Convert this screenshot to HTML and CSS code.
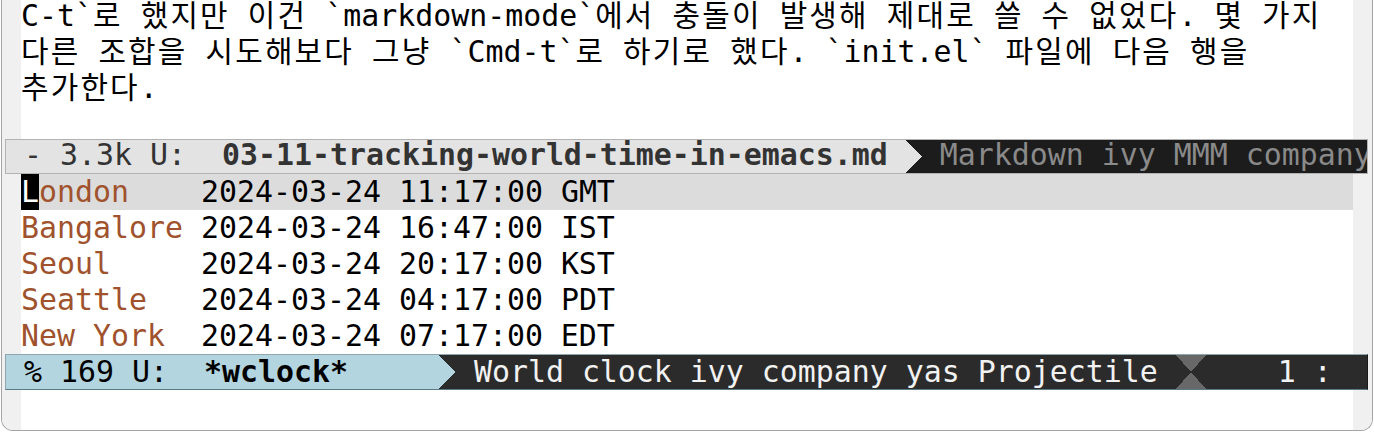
FILE: index.html
```html
<!DOCTYPE html>
<html lang="ko">
<head>
<meta charset="utf-8">
<title>wclock</title>
<link rel="stylesheet" href="styles.css">
</head>
<body>
<div class="frame">
  <div class="window text-window">
    <div class="fringe"></div>
    <div class="buffer">
      <div class="lines">
        <div class="line">C-t`<span class="ko">로</span> <span class="ko">했지만</span> <span class="ko">이건</span> `markdown-mode`<span class="ko">에서</span> <span class="ko">충돌이</span> <span class="ko">발생해</span> <span class="ko">제대로</span> <span class="ko">쓸</span> <span class="ko">수</span> <span class="ko">없었다</span>. <span class="ko">몇</span> <span class="ko">가지</span></div>
        <div class="line"><span class="ko">다른</span> <span class="ko">조합을</span> <span class="ko">시도해보다</span> <span class="ko">그냥</span> `Cmd-t`<span class="ko">로</span> <span class="ko">하기로</span> <span class="ko">했다</span>. `init.el` <span class="ko">파일에</span> <span class="ko">다음</span> <span class="ko">행을</span></div>
        <div class="line"><span class="ko">추가한다</span>.</div>
      </div>
    </div>
    <div class="fringe"></div>
  </div>

  <div class="modeline inactive">
    <span class="ml-left"> - 3.3k U:  <b>03-11-tracking-world-time-in-emacs.md</b> </span>
    <svg class="sep sep-inactive" width="16" height="33" viewBox="0 0 16 33" shape-rendering="crispEdges"><polygon points="0,0 16,16.5 0,33"/></svg>
    <span class="ml-right"> Markdown ivy MMM company yas Projectile</span>
  </div>

  <div class="window clock-window">
    <div class="fringe"></div>
    <div class="buffer">
      <div class="row current"><span class="city"><span class="cursor">L</span>ondon</span>    2024-03-24 11:17:00 GMT</div>
      <div class="row"><span class="city">Bangalore</span> 2024-03-24 16:47:00 IST</div>
      <div class="row"><span class="city">Seoul</span>     2024-03-24 20:17:00 KST</div>
      <div class="row"><span class="city">Seattle</span>   2024-03-24 04:17:00 PDT</div>
      <div class="row"><span class="city">New York</span>  2024-03-24 07:17:00 EDT</div>
    </div>
    <div class="fringe"></div>
  </div>

  <div class="modeline active">
    <span class="ml-left"> % 169 U:  <b>*wclock*</b>     </span>
    <svg class="sep sep-active" width="18" height="34" viewBox="0 0 18 34" shape-rendering="crispEdges"><polygon points="0,0 18,17 0,34"/></svg>
    <span class="ml-right"> World clock ivy company yas Projectile <svg class="hourglass" width="30" height="34" viewBox="0 0 30 34" shape-rendering="crispEdges"><polygon points="0,0 30,0 15,17"/><polygon points="0,34 30,34 15,17"/></svg>    1 :</span>
  </div>

  <div class="window minibuffer">
    <div class="fringe"></div>
    <div class="buffer"></div>
    <div class="fringe"></div>
  </div>
</div>
</body>
</html>
```
FILE: styles.css
```css
* {
  box-sizing: border-box;
}

html,
body {
  margin: 0;
  background: #ffffff;
}

body {
  font-family: "DejaVu Sans Mono", "Noto Sans CJK KR", monospace;
  font-size: 29.9px;
  color: #000000;
}

.frame {
  margin-left: 1px;
  width: 1372px;
  height: 431px;
  border: 1px solid #a4a4a4;
  border-top: 0;
  border-radius: 0 0 12px 12px;
  background: #f0f0f0;
  overflow: hidden;
  display: flex;
  flex-direction: column;
}

.window {
  display: grid;
  grid-template-columns: 19px 1332px 19px;
}

.fringe {
  background: #f0f0f0;
}

.buffer {
  background: #ffffff;
  overflow: hidden;
}

.text-window {
  height: 139px;
}

.lines {
  margin-top: -2px;
}

.line {
  height: 36px;
  line-height: 36px;
  white-space: pre;
}

/* Hangul glyphs advance a little wider in the original terminal font */
.ko {
  letter-spacing: 2.2px;
}

.clock-window {
  height: 180px;
}

.row {
  height: 36px;
  line-height: 36px;
  white-space: pre;
}

.row.current {
  background: #dcdcdc;
}

.city {
  color: #a0522d;
}

.cursor {
  display: inline-block;
  height: 36px;
  background: #000000;
  color: #ffffff;
}

.minibuffer {
  height: 40px;
}

/* mode lines */
.modeline {
  display: flex;
  align-items: stretch;
  margin: 0 4px 0 3px;
  overflow: hidden;
}

.modeline .ml-left {
  white-space: pre;
}

.modeline b {
  font-weight: bold;
}

.modeline .ml-right {
  flex: 1;
  display: flex;
  align-items: flex-start;
  overflow: hidden;
  white-space: pre;
}

.sep {
  flex: none;
  display: block;
}

.inactive {
  height: 35px;
  border: 1px solid #b2b2b2;
}

.inactive .ml-left {
  background: #e3e3e3;
  color: #333333;
  line-height: 29px;
}

.inactive .ml-right {
  background: #1c1c1c;
  color: #8a8a8a;
  line-height: 29px;
}

.sep-inactive {
  background: #1c1c1c;
  fill: #e3e3e3;
}

.active {
  height: 36px;
  border-top: 1px solid #8fa6ae;
  border-left: 1px solid #8fa6ae;
  border-bottom: 1px solid #5b7a86;
  border-right: 1px solid #1a1a1a;
}

.active .ml-left {
  background: #b3d5e0;
  color: #000000;
  line-height: 34px;
}

.active .ml-right {
  background: #2b2b2b;
  color: #f2f2f2;
  line-height: 34px;
}

.sep-active {
  background: #2b2b2b;
  fill: #b3d5e0;
}

.hourglass {
  flex: none;
  display: block;
  fill: #686868;
}
```
